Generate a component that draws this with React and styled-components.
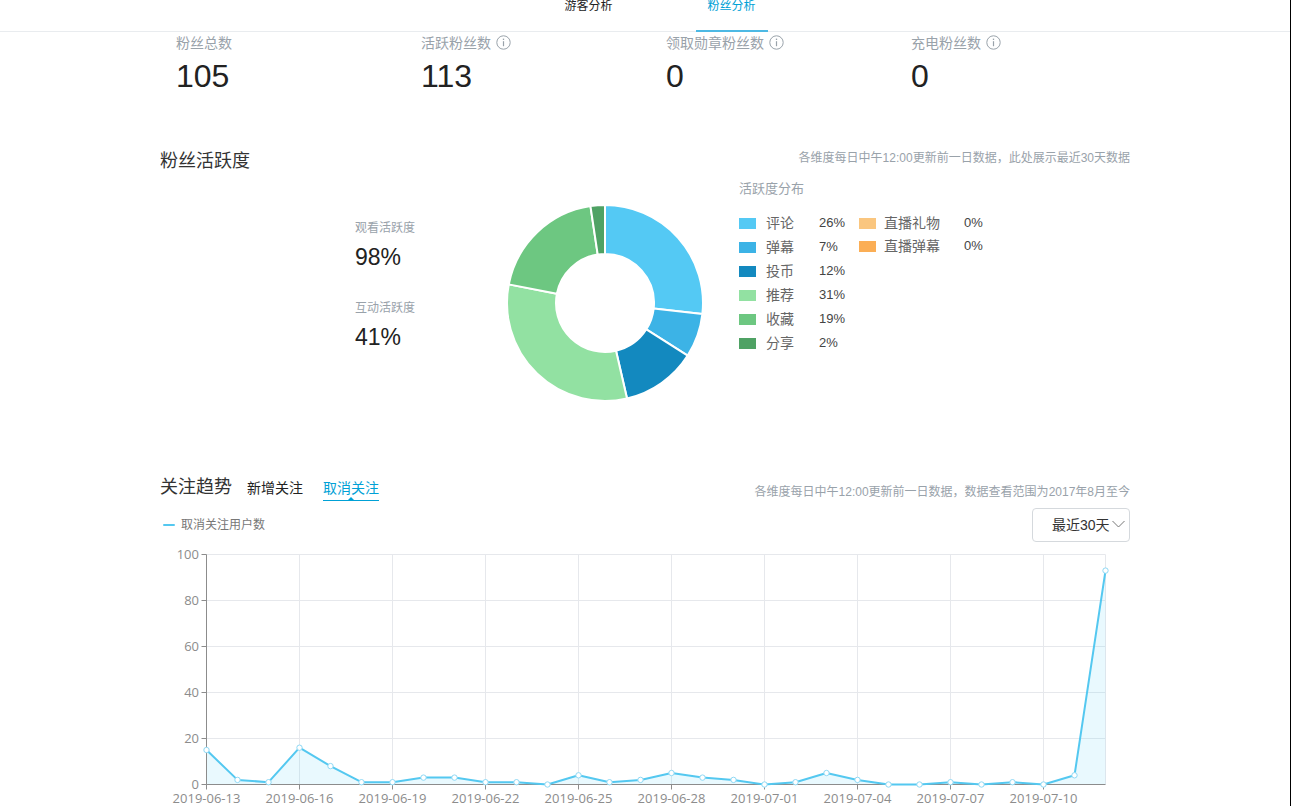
import React, { useState } from "react"
import styled, { createGlobalStyle } from "styled-components"

const GlobalStyle = createGlobalStyle`
  * {
    box-sizing: border-box;
  }
  body {
    margin: 0;
    background-color: #fff;
    color: #222;
    font-family: "Liberation Sans", "Noto Sans CJK SC", sans-serif;
  }
  button, select {
    font-family: inherit;
  }
`

const Page = styled.div`
  min-height: 100vh;
  border-right: 1px solid #000;
`

const Container = styled.main`
  max-width: 970px;
  margin: 0 auto;
`

const Nav = styled.nav`
  display: flex;
  justify-content: center;
  gap: 71px;
  height: 32px;
  padding-left: 30px;
  border-bottom: 1px solid #e9ecef;
`

const NavTab = styled.button`
  height: 32px;
  padding: 0 12px 17px;
  border: 0;
  border-bottom: 2px solid ${p => (p.$active ? "#4db9e4" : "transparent")};
  background: none;
  color: ${p => (p.$active ? "#00a1d6" : "#222")};
  font-size: 12px;
  line-height: 13px;
  cursor: pointer;
`

const Stats = styled.section`
  display: grid;
  grid-template-columns: repeat(4, 245px);
  padding-left: 16px;
  margin-right: -26px;
`

const StatLabel = styled.div`
  display: flex;
  align-items: center;
  gap: 5px;
  color: #99a2aa;
  font-size: 14px;
  line-height: 22px;
  svg {
    margin-bottom: 2px;
  }
`

const StatValue = styled.div`
  font-size: 32px;
  line-height: 44px;
`

const SectionHead = styled.header`
  display: flex;
  align-items: ${p => p.$align};
  .title {
    margin: 0;
    color: #333;
    font-size: 18px;
    font-weight: normal;
    line-height: 28px;
  }
  .note {
    margin: 2px 0 0 auto;
    color: #99a2aa;
    font-size: 12px;
    line-height: 18px;
  }
`

const Activity = styled.section`
  margin-top: 49px;
`

const ActivityBody = styled.div`
  display: grid;
  grid-template-columns: 150px 200px 1fr;
  padding-left: 195px;
  min-height: 298px;
  align-items: start;
`

const Rates = styled.div`
  display: grid;
  gap: 22px;
  padding-top: 43px;
  .label {
    color: #99a2aa;
    font-size: 12px;
    line-height: 20px;
  }
  .value {
    font-size: 23px;
    line-height: 38px;
  }
`

const DonutSvg = styled.svg`
  display: block;
  width: 200px;
  height: 200px;
  margin-top: 28px;
`

const Distribution = styled.div`
  padding: 4px 0 0 34px;
  .title {
    margin: 0 0 12px;
    color: #99a2aa;
    font-size: 13px;
    font-weight: normal;
    line-height: 20px;
  }
  .lists {
    display: flex;
    align-items: flex-start;
  }
`

const LegendList = styled.ul`
  width: ${p => p.$width};
  margin: 0;
  padding: 0;
  list-style: none;
`

const LegendItem = styled.li`
  display: grid;
  grid-template-columns: ${p => p.$columns};
  align-items: center;
  height: ${p => p.$height};
  color: #666;
  font-size: 14px;
  line-height: 24px;
  white-space: nowrap;
  .value {
    color: #444;
    font-size: 13px;
  }
`

const Swatch = styled.span`
  width: 17px;
  height: 11px;
  background-color: ${p => p.$color};
`

const TrendTabs = styled.div`
  display: flex;
  gap: 20px;
  margin-left: 15px;
`

const TrendTab = styled.button`
  position: relative;
  height: 28px;
  padding: 2px 0 0;
  border: 0;
  border-bottom: 1px solid ${p => (p.$active ? "#00a1d6" : "transparent")};
  background: none;
  color: ${p => (p.$active ? "#00a1d6" : "#222")};
  font-size: 14px;
  line-height: 24px;
  cursor: pointer;
  &::after {
    content: "";
    display: ${p => (p.$active ? "block" : "none")};
    position: absolute;
    bottom: 0;
    left: 50%;
    margin-left: -3px;
    border: 3px solid transparent;
    border-top: 0;
    border-bottom-color: #00a1d6;
  }
`

const TrendBar = styled.div`
  display: flex;
  justify-content: space-between;
  align-items: center;
  margin-top: 7px;
`

const SeriesName = styled.div`
  display: flex;
  align-items: center;
  gap: 6px;
  padding-left: 3px;
  color: #777;
  font-size: 12px;
  line-height: 20px;
  &::before {
    content: "";
    width: 12px;
    height: 2px;
    border-radius: 1px;
    background-color: #54c8f0;
  }
`

const RangePicker = styled.label`
  position: relative;
  select {
    display: block;
    width: 98px;
    height: 34px;
    padding: 0 0 0 19px;
    border: 1px solid #d5d9dd;
    border-radius: 4px;
    appearance: none;
    background: #fff;
    color: #333;
    font-size: 14px;
  }
  svg {
    position: absolute;
    top: 12px;
    right: 5px;
    pointer-events: none;
  }
`

const ChartSvg = styled.svg`
  display: block;
  width: 100%;
  text {
    fill: #8c8c8c;
    font-family: "Open Sans", "Noto Sans", sans-serif;
    font-size: 13px;
  }
`

const stats = [
  { label: "粉丝总数", value: 105 },
  { label: "活跃粉丝数", value: 113, info: true },
  { label: "领取勋章粉丝数", value: 0, info: true },
  { label: "充电粉丝数", value: 0, info: true },
]

// value is the rounded figure in the legend, share the one the slices use
const interactions = [
  { label: "评论", value: 26, share: 26, color: "#54c9f4" },
  { label: "弹幕", value: 7, share: 7, color: "#3cb3e6" },
  { label: "投币", value: 12, share: 12, color: "#1389bf" },
  { label: "推荐", value: 31, share: 30.7, color: "#92e1a2" },
  { label: "收藏", value: 19, share: 19, color: "#6dc781" },
  { label: "分享", value: 2, share: 2.3, color: "#4fa264" },
]

const live = [
  { label: "直播礼物", value: 0, color: "#fac67f" },
  { label: "直播弹幕", value: 0, color: "#fbae55" },
]

const unfollows = [
  15, 2, 1, 16, 8, 1, 1, 3, 3, 1, 1, 0, 4, 1, 2, 5, 3, 2, 0, 1, 5, 2, 0, 0, 1,
  0, 1, 0, 4, 93,
]

const dates = [
  "2019-06-13",
  "2019-06-16",
  "2019-06-19",
  "2019-06-22",
  "2019-06-25",
  "2019-06-28",
  "2019-07-01",
  "2019-07-04",
  "2019-07-07",
  "2019-07-10",
]

const InfoIcon = () => (
  <svg width="15" height="15" viewBox="0 0 15 15" fill="none" stroke="#99a2aa">
    <circle cx="7.5" cy="7.5" r="6.7" />
    <path d="M7.5 6.2v5" strokeWidth="1.2" />
    <path d="M7.5 3.6v1.4" strokeWidth="1.3" />
  </svg>
)

const polar = (radius, turn) => {
  const angle = turn * Math.PI * 2
  return `${100 + radius * Math.sin(angle)} ${100 - radius * Math.cos(angle)}`
}

const Donut = ({ data }) => {
  const total = data.reduce((sum, d) => sum + d.share, 0)
  let turn = 0
  return (
    <DonutSvg viewBox="0 0 200 200" role="img" aria-label="活跃度分布">
      {data.map(d => {
        const start = turn
        const end = turn + d.share / total
        const large = end - start > 0.5 ? 1 : 0
        turn = end
        return (
          <path
            key={d.label}
            fill={d.color}
            stroke="#fff"
            strokeWidth="2"
            strokeLinejoin="bevel"
            d={`M${polar(98, start)} A98 98 0 ${large} 1 ${polar(98, end)}
              L${polar(49, end)} A49 49 0 ${large} 0 ${polar(49, start)}Z`}
          />
        )
      })}
    </DonutSvg>
  )
}

const LEFT = 46.5
const RIGHT = 945.5
const TOP = 12.5
const BOTTOM = 242.5
const STEP = 31

const TrendChart = ({ data }) => {
  const points = data.map((v, i) => [LEFT + i * STEP, BOTTOM - v * 2.3])
  const line = points.map(p => p.join(",")).join(" ")
  return (
    <ChartSvg viewBox="0 0 970 264" role="img" aria-label="取消关注用户数">
      <g stroke="#e6e8ec">
        {[20, 40, 60, 80, 100].map(v => (
          <path key={v} d={`M${LEFT} ${BOTTOM - v * 2.3}H${RIGHT}`} />
        ))}
        {dates.slice(1).map((date, i) => (
          <path key={date} d={`M${LEFT + (i + 1) * STEP * 3} ${TOP}V${BOTTOM}`} />
        ))}
        <path d={`M${RIGHT} ${TOP}V${BOTTOM}`} />
      </g>
      <polygon
        points={`${LEFT},${BOTTOM} ${line} ${RIGHT},${BOTTOM}`}
        fill="#54d0fa"
        fillOpacity="0.13"
      />
      <path
        d={`M${LEFT} ${TOP}V${BOTTOM}H${RIGHT}`}
        fill="none"
        stroke="#8c8c8c"
      />
      {[0, 20, 40, 60, 80, 100].map(v => (
        <g key={v}>
          <path d={`M${LEFT - 5} ${BOTTOM - v * 2.3}h5`} stroke="#8c8c8c" />
          <text x="39" y={BOTTOM - v * 2.3 + 4} textAnchor="end">
            {v}
          </text>
        </g>
      ))}
      {dates.map((date, i) => (
        <g key={date}>
          <path d={`M${LEFT + i * STEP * 3} ${BOTTOM}v5`} stroke="#8c8c8c" />
          <text x={LEFT + i * STEP * 3} y="261" textAnchor="middle">
            {date}
          </text>
        </g>
      ))}
      <polyline
        points={line}
        fill="none"
        stroke="#54c8f0"
        strokeWidth="2"
        strokeLinejoin="round"
      />
      {points.map(([x, y]) => (
        <circle key={x} cx={x} cy={y} r="2.7" fill="#fff" stroke="#8fd9f5" />
      ))}
    </ChartSvg>
  )
}

const Legend = ({ data, width, columns, height = "24px" }) => (
  <LegendList $width={width}>
    {data.map(d => (
      <LegendItem key={d.label} $columns={columns} $height={height}>
        <Swatch $color={d.color} />
        <span>{d.label}</span>
        <span className="value">{d.value}%</span>
      </LegendItem>
    ))}
  </LegendList>
)

const App = () => {
  const [tab, setTab] = useState("粉丝分析")
  const [trend, setTrend] = useState("取消关注")
  return (
    <Page>
      <GlobalStyle />
      <Nav>
        {["游客分析", "粉丝分析"].map(name => (
          <NavTab key={name} $active={tab === name} onClick={() => setTab(name)}>
            {name}
          </NavTab>
        ))}
      </Nav>
      <Container>
        <Stats>
          {stats.map(s => (
            <div key={s.label}>
              <StatLabel>
                {s.label}
                {s.info && <InfoIcon />}
              </StatLabel>
              <StatValue>{s.value}</StatValue>
            </div>
          ))}
        </Stats>
        <Activity>
          <SectionHead $align="flex-start">
            <h2 className="title">粉丝活跃度</h2>
            <p className="note">
              各维度每日中午12:00更新前一日数据，此处展示最近30天数据
            </p>
          </SectionHead>
          <ActivityBody>
            <Rates>
              <div>
                <div className="label">观看活跃度</div>
                <div className="value">98%</div>
              </div>
              <div>
                <div className="label">互动活跃度</div>
                <div className="value">41%</div>
              </div>
            </Rates>
            <Donut data={interactions} />
            <Distribution>
              <h3 className="title">活跃度分布</h3>
              <div className="lists">
                <Legend
                  data={interactions}
                  width="120px"
                  columns="27px 53px 1fr"
                />
                <Legend
                  data={live}
                  width="130px"
                  columns="25px 80px 1fr"
                  height="23px"
                />
              </div>
            </Distribution>
          </ActivityBody>
        </Activity>
        <section>
          <SectionHead $align="flex-end">
            <h2 className="title">关注趋势</h2>
            <TrendTabs>
              {["新增关注", "取消关注"].map(name => (
                <TrendTab
                  key={name}
                  $active={trend === name}
                  onClick={() => setTrend(name)}
                >
                  {name}
                </TrendTab>
              ))}
            </TrendTabs>
            <p className="note">
              各维度每日中午12:00更新前一日数据，数据查看范围为2017年8月至今
            </p>
          </SectionHead>
          <TrendBar>
            <SeriesName>取消关注用户数</SeriesName>
            <RangePicker>
              <select aria-label="时间范围">
                <option>最近30天</option>
              </select>
              <svg width="13" height="9" viewBox="0 0 13 9" fill="none" stroke="#777">
                <path d="M0.5 1L6.5 7L12.5 1" />
              </svg>
            </RangePicker>
          </TrendBar>
          <TrendChart data={unfollows} />
        </section>
      </Container>
    </Page>
  )
}

export default App
